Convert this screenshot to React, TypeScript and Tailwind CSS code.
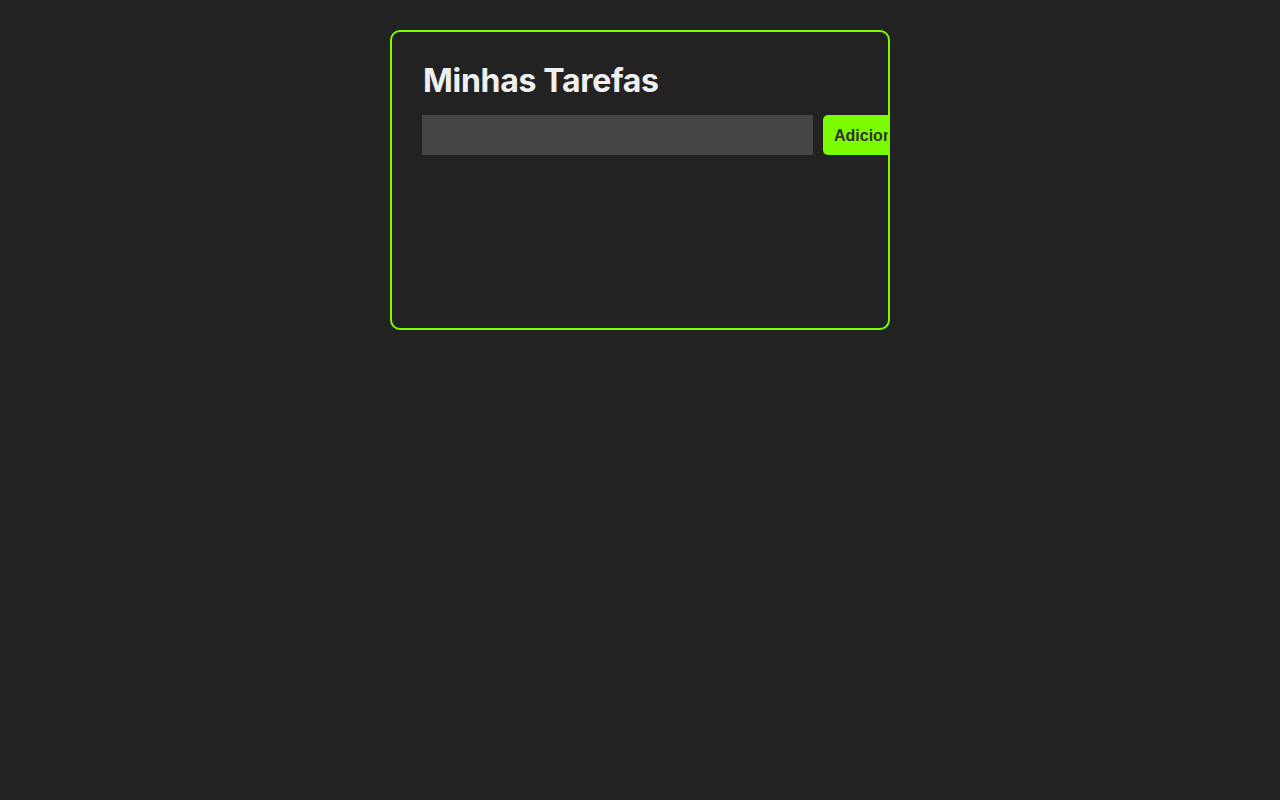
import React from "react";

export default function App() {
  return (
    <div className="min-h-screen w-full bg-[#222222] pt-[30px]" style={{ fontFamily: "Inter, 'Noto Sans', sans-serif" }}>
      <div className="mx-auto h-[300px] w-[500px] overflow-hidden rounded-[10px] border-2 border-[#7CFC00] bg-[#222222] p-[30px]">
        <h1 className="mb-[15px] ml-px text-[32px] font-bold leading-[38px] tracking-[-0.3px] text-[#f0f0f0]">Minhas Tarefas</h1>
        <div className="flex gap-[10px]">
          <input className="h-[40px] w-[391px] shrink-0 border-0 bg-[#444444] px-[10px] text-[16px] text-[#f0f0f0] outline-none" />
          <button
            className="h-[40px] shrink-0 rounded-[5px] bg-[#7CFC00] px-[11px] pt-[2px] text-[16px] font-bold text-[#333333]"
            style={{ fontFamily: "'Liberation Sans', Arial, sans-serif" }}
          >
            Adicionar
          </button>
        </div>
      </div>
    </div>
  );
}
